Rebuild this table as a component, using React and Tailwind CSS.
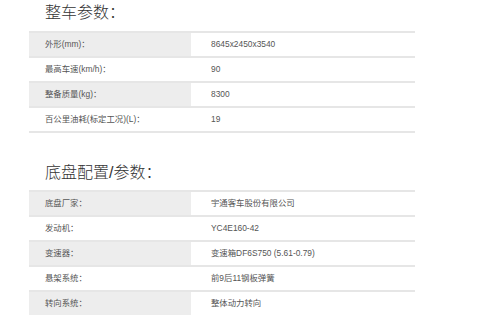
const chassisBody = [
  ["外形(mm)：", "8645x2450x3540"],
  ["最高车速(km/h)：", "90"],
  ["整备质量(kg)：", "8300"],
  ["百公里油耗(标定工况)(L)：", "19"],
];

const chassisConfig = [
  ["底盘厂家：", "宇通客车股份有限公司"],
  ["发动机：", "YC4E160-42"],
  ["变速器：", "变速箱DF6S750 (5.61-0.79)"],
  ["悬架系统：", "前9后11钢板弹簧"],
  ["转向系统：", "整体动力转向"],
];

const font = {
  fontFamily: '"Liberation Sans", "Noto Sans CJK SC", sans-serif',
};

function SpecTable({ rows, closed }) {
  return (
    <div
      className={
        "ml-[29px] w-[386px] " + (closed ? "border-b-2 border-[#e6e6e6]" : "")
      }
    >
      {rows.map(([label, value], i) => (
        <div
          key={label}
          className="flex h-[25px] border-t-2 border-[#e6e6e6] text-[8.4px] text-[#555]"
        >
          <div
            className={
              "flex w-[162px] items-center pl-[16px] " +
              (i % 2 === 0 ? "bg-[#ededed]" : "bg-white")
            }
          >
            {label}
          </div>
          <div className="flex flex-1 items-center bg-white pl-[20px]">
            {value}
          </div>
        </div>
      ))}
    </div>
  );
}

export default function App() {
  return (
    <div className="h-[320px] w-[480px] overflow-hidden bg-white" style={font}>
      <div className="h-[31px] pt-[5px] pl-[45px] text-[16px] font-light leading-[16px] text-[#333]">
        整车参数：
      </div>
      <SpecTable rows={chassisBody} closed />

      <div className="h-[57px] pt-[32px] pl-[45px] text-[16px] font-light leading-[16px] text-[#333]">
        底盘配置/参数：
      </div>
      <SpecTable rows={chassisConfig} />
    </div>
  );
}
